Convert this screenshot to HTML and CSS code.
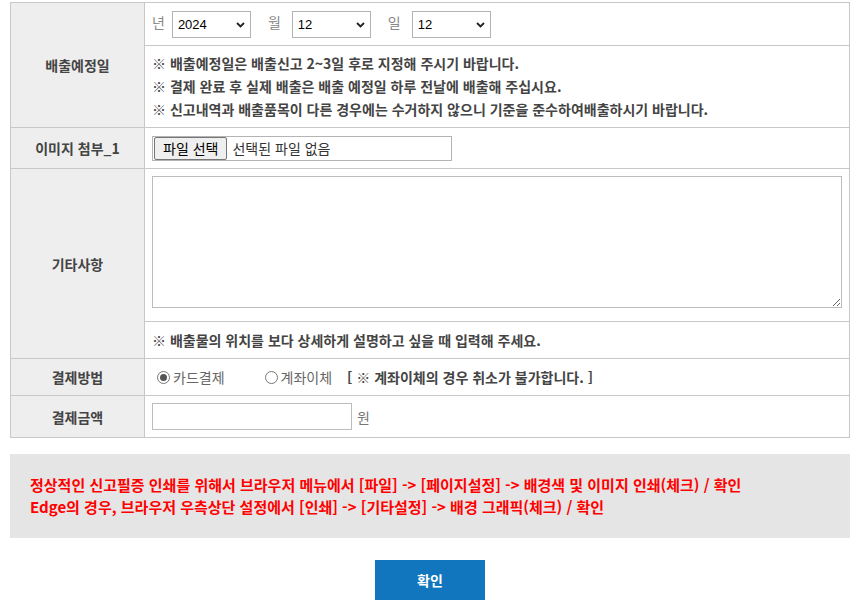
FILE: index.html
```html
<!DOCTYPE html>
<html lang="ko">
<head>
<meta charset="utf-8">
<title>배출신고</title>
<link rel="stylesheet" href="styles.css">
</head>
<body>
<div class="form">
  <div class="lbl span2">배출예정일</div>
  <div class="cell date-row">
    <span class="unit">년</span>
    <span class="sel"><select><option>2024</option></select><svg class="chev" width="9" height="6" viewBox="0 0 9 6"><path d="M1 1 L4.5 4.5 L8 1" fill="none" stroke="#222" stroke-width="1.8"/></svg></span>
    <span class="unit gap">월</span>
    <span class="sel"><select><option>12</option></select><svg class="chev" width="9" height="6" viewBox="0 0 9 6"><path d="M1 1 L4.5 4.5 L8 1" fill="none" stroke="#222" stroke-width="1.8"/></svg></span>
    <span class="unit gap">일</span>
    <span class="sel"><select><option>12</option></select><svg class="chev" width="9" height="6" viewBox="0 0 9 6"><path d="M1 1 L4.5 4.5 L8 1" fill="none" stroke="#222" stroke-width="1.8"/></svg></span>
  </div>
  <div class="cell notes">
    <p>※ 배출예정일은 배출신고 2~3일 후로 지정해 주시기 바랍니다.</p>
    <p>※ 결제 완료 후 실제 배출은 배출 예정일 하루 전날에 배출해 주십시요.</p>
    <p>※ 신고내역과 배출품목이 다른 경우에는 수거하지 않으니 기준을 준수하여배출하시기 바랍니다.</p>
  </div>

  <div class="lbl">이미지 첨부_1</div>
  <div class="cell">
    <label class="file"><span class="fbtn">파일 선택</span><span class="fname">선택된 파일 없음</span></label>
  </div>

  <div class="lbl span2">기타사항</div>
  <div class="cell ta-cell"><textarea class="ta"></textarea></div>
  <div class="cell note">※ 배출물의 위치를 보다 상세하게 설명하고 싶을 때 입력해 주세요.</div>

  <div class="lbl">결제방법</div>
  <div class="cell pay">
    <span class="radio on"></span><span class="rtxt">카드결제</span>
    <span class="radio r2"></span><span class="rtxt">계좌이체</span>
    <span class="warn">[ ※ 계좌이체의 경우 취소가 불가합니다. ]</span>
  </div>

  <div class="lbl">결제금액</div>
  <div class="cell">
    <input class="amount" type="text"><span class="won">원</span>
  </div>
</div>

<div class="notice">
  <p>정상적인 신고필증 인쇄를 위해서 브라우저 메뉴에서 [파일] -&gt; [페이지설정] -&gt; 배경색 및 이미지 인쇄(체크) / 확인</p>
  <p>Edge의 경우, 브라우저 우측상단 설정에서 [인쇄] -&gt; [기타설정] -&gt; 배경 그래픽(체크) / 확인</p>
</div>

<div class="actions"><button class="ok" type="button">확인</button></div>
</body>
</html>
```
FILE: styles.css
```css
* { box-sizing: border-box; }
body {
  margin: 2px 0 0 10px;
  width: 840px;
  font-family: "Noto Sans CJK KR", "Noto Sans", sans-serif;
  font-size: 14px;
  color: #444;
  background: #fff;
}
p { margin: 0; }
.form {
  display: grid;
  grid-template-columns: 134px 1fr;
  grid-template-rows: 43px 82px 41px 153px 37px 37px 42px;
  border-top: 1px solid #c8c8c8;
  border-left: 1px solid #c8c8c8;
}
.lbl, .cell {
  border-right: 1px solid #c8c8c8;
  border-bottom: 1px solid #c8c8c8;
}
.lbl {
  background: #eeeeee;
  font-weight: bold;
  color: #444;
  display: flex;
  align-items: center;
  justify-content: center;
  grid-column: 1;
}
.span2 { grid-row: span 2; }
.cell {
  grid-column: 2;
  display: flex;
  align-items: center;
  padding: 0 7px;
}
.date-row { padding-top: 1px; }
.unit { color: #888; margin-right: 7px; line-height: 1; margin-top: -6px; }
.unit.gap { margin-left: 17px; margin-right: 11px; }
.sel { position: relative; display: inline-block; height: 27px; }
.sel select {
  appearance: none;
  -webkit-appearance: none;
  width: 79px;
  height: 27px;
  border: 1px solid #b4b4b4;
  border-radius: 0;
  background: #fff;
  padding: 0 0 0 5px;
  font-family: "Liberation Sans", Arial, sans-serif;
  font-size: 13px;
  color: #000;
  display: block;
}
.chev { position: absolute; right: 6px; top: 11px; pointer-events: none; }
.notes {
  flex-direction: column;
  align-items: flex-start;
  justify-content: center;
  font-weight: bold;
  line-height: 23px;
}
.file {
  display: flex;
  align-items: center;
  width: 300px;
  height: 25px;
  border: 1px solid #b4b4b4;
  padding: 0 1px;
}
.fbtn {
  height: 23px;
  line-height: 21px;
  padding: 0 8px;
  border: 1px solid #767676;
  border-radius: 2px;
  background: #efefef;
  color: #000;
  font-size: 14px;
}
.fname { color: #333; margin-left: 5px; }
.ta-cell { align-items: flex-start; padding-top: 7px; }
.ta {
  display: block;
  width: 690px;
  height: 132px;
  border: 1px solid #bcbcbc;
  resize: vertical;
  margin: 0;
  font-family: inherit;
}
.note { font-weight: bold; }
.radio {
  width: 13px;
  height: 13px;
  border: 1px solid #777;
  border-radius: 50%;
  margin-left: 5px;
  margin-right: 3px;
  position: relative;
  background: #fff;
}
.radio.on::after {
  content: "";
  position: absolute;
  left: 2px; top: 2px;
  width: 7px; height: 7px;
  border-radius: 50%;
  background: #555;
}
.radio.r2 { margin-left: 40px; margin-right: 3px; }
.rtxt { color: #666; font-weight: normal; }
.warn { font-weight: bold; margin-left: 15px; color: #444; }
.amount {
  width: 200px;
  height: 27px;
  border: 1px solid #bcbcbc;
  margin: 0;
  padding: 0 4px;
}
.won { color: #777; margin-left: 5px; }
.notice {
  margin-top: 16px;
  background: #e5e5e5;
  padding: 20px 20px;
  color: #ff0000;
  font-weight: bold;
  font-size: 15px;
  line-height: 22px;
  height: 84px;
}
.actions { display: flex; justify-content: center; margin-top: 22px; }
.ok {
  width: 110px;
  height: 40px;
  border: 0;
  background: #1176be;
  color: #fff;
  font-family: "Noto Sans CJK KR", sans-serif;
  font-weight: bold;
  font-size: 14px;
  cursor: pointer;
}
```
